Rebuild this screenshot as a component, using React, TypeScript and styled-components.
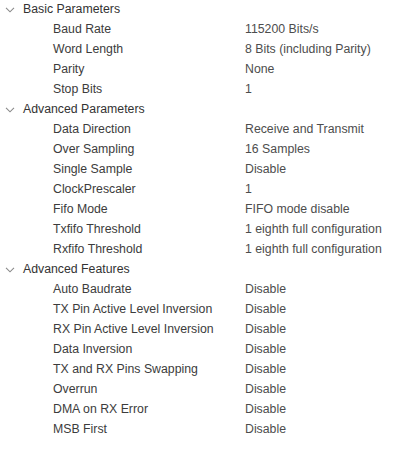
import React from 'react';
import styled, { createGlobalStyle } from 'styled-components';

const GlobalStyle = createGlobalStyle`
  html, body {
    margin: 0;
    padding: 0;
    background: #fff;
  }
  body {
    font-family: "Liberation Sans", Arial, sans-serif;
    font-size: 12.3px;
  }
`;

interface Param {
  label: string;
  value: string;
}

interface Group {
  title: string;
  params: Param[];
}

const groups: Group[] = [
  {
    title: 'Basic Parameters',
    params: [
      { label: 'Baud Rate', value: '115200 Bits/s' },
      { label: 'Word Length', value: '8 Bits (including Parity)' },
      { label: 'Parity', value: 'None' },
      { label: 'Stop Bits', value: '1' }
    ]
  },
  {
    title: 'Advanced Parameters',
    params: [
      { label: 'Data Direction', value: 'Receive and Transmit' },
      { label: 'Over Sampling', value: '16 Samples' },
      { label: 'Single Sample', value: 'Disable' },
      { label: 'ClockPrescaler', value: '1' },
      { label: 'Fifo Mode', value: 'FIFO mode disable' },
      { label: 'Txfifo Threshold', value: '1 eighth full configuration' },
      { label: 'Rxfifo Threshold', value: '1 eighth full configuration' }
    ]
  },
  {
    title: 'Advanced Features',
    params: [
      { label: 'Auto Baudrate', value: 'Disable' },
      { label: 'TX Pin Active Level Inversion', value: 'Disable' },
      { label: 'RX Pin Active Level Inversion', value: 'Disable' },
      { label: 'Data Inversion', value: 'Disable' },
      { label: 'TX and RX Pins Swapping', value: 'Disable' },
      { label: 'Overrun', value: 'Disable' },
      { label: 'DMA on RX Error', value: 'Disable' },
      { label: 'MSB First', value: 'Disable' }
    ]
  }
];

const Chevron = () => (
  <svg width="10" height="6" viewBox="0 0 10 6">
    <path d="M1 0.8 L5 4.8 L9 0.8" fill="none" stroke="#8a8a8a" strokeWidth="1.1" />
  </svg>
);

const App = () => {
  return (
    <>
      <GlobalStyle />
      <Tree>
        {groups.map((g) => (
          <section key={g.title}>
            <GroupHeader>
              <Toggle>
                <Chevron />
              </Toggle>
              <GroupTitle>{g.title}</GroupTitle>
            </GroupHeader>
            {g.params.map((p) => (
              <Row key={p.label}>
                <Label>{p.label}</Label>
                <Value>{p.value}</Value>
              </Row>
            ))}
          </section>
        ))}
      </Tree>
    </>
  );
};

export default App;

const Tree = styled.div`
  width: 401px;
  display: flex;
  flex-direction: column;
`;

const GroupHeader = styled.div`
  height: 20px;
  display: flex;
  align-items: flex-start;
  line-height: 18px;
`;

const Toggle = styled.span`
  width: 23px;
  height: 18px;
  display: flex;
  align-items: center;
  padding-left: 5px;
  box-sizing: border-box;
  padding-top: 1px;
`;

const GroupTitle = styled.span`
  color: #333;
`;

const Row = styled.div`
  height: 20px;
  display: grid;
  grid-template-columns: 245px 1fr;
  line-height: 18px;
`;

const Label = styled.span`
  padding-left: 53px;
  color: #3c3c3c;
  white-space: nowrap;
`;

const Value = styled.span`
  color: #4d4d4d;
  white-space: nowrap;
`;
